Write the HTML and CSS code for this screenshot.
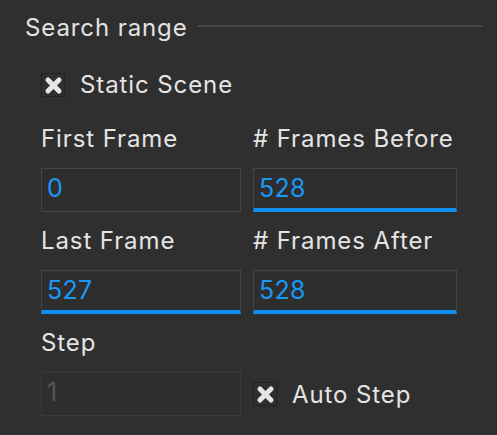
FILE: index.html
```html
<!DOCTYPE html>
<html>
<head>
<meta charset="utf-8">
<link rel="stylesheet" href="styles.css">
</head>
<body>
<div class="panel">
  <div class="group-header">
    <span class="group-title">Search range</span>
    <span class="group-rule"></span>
  </div>
  <label class="check-row static-row">
    <span class="checkbox"><svg viewBox="0 0 24 24" width="24" height="24"><path d="M7 7 L18 18 M18 7 L7 18" /></svg></span>
    <span class="check-label">Static Scene</span>
  </label>
  <div class="fields">
    <div class="field">
      <div class="field-label">First Frame</div>
      <div class="input">0</div>
    </div>
    <div class="field">
      <div class="field-label"># Frames Before</div>
      <div class="input focused">528</div>
    </div>
    <div class="field">
      <div class="field-label">Last Frame</div>
      <div class="input focused">527</div>
    </div>
    <div class="field">
      <div class="field-label"># Frames After</div>
      <div class="input focused">528</div>
    </div>
    <div class="field">
      <div class="field-label">Step</div>
      <div class="input disabled">1</div>
    </div>
    <div class="field field-bottom">
      <label class="check-row">
        <span class="checkbox"><svg viewBox="0 0 24 24" width="24" height="24"><path d="M7 7 L18 18 M18 7 L7 18" /></svg></span>
        <span class="check-label">Auto Step</span>
      </label>
    </div>
  </div>
</div>
</body>
</html>
```
FILE: styles.css
```css
html, body {
  margin: 0;
  padding: 0;
  background: #2f2f2f;
}
body {
  font-family: Inter, "Noto Sans", sans-serif;
  color: #e4e4e4;
  width: 497px;
  height: 435px;
  overflow: hidden;
}
.panel {
  padding: 13px 14px 0 41px;
}
.group-header {
  display: flex;
  align-items: center;
  margin-left: -16px;
  height: 29px;
}
.group-title {
  font-size: 24px;
  line-height: 29px;
  letter-spacing: 0.9px;
  color: #e2e2e2;
}
.group-rule {
  flex: 1;
  height: 2px;
  background: #464646;
  margin-left: 10px;
  margin-top: -3px;
}
.check-row {
  display: flex;
  align-items: center;
  height: 29px;
}
.static-row {
  margin-top: 28px;
}
.checkbox {
  width: 24px;
  height: 24px;
  box-sizing: border-box;
  border: 1px solid #222;
  display: flex;
  align-items: center;
  justify-content: center;
}
.checkbox svg {
  display: block;
  stroke: #e6e6e6;
  stroke-width: 5;
  stroke-linecap: round;
  fill: none;
  margin: -1px;
}
.check-label {
  font-size: 24px;
  line-height: 29px;
  letter-spacing: 0.9px;
  margin-left: 15px;
}
.fields {
  display: grid;
  grid-template-columns: 200px 204px;
  column-gap: 12px;
  row-gap: 14px;
  margin-top: 25px;
}
.field-label {
  font-size: 24px;
  line-height: 29px;
  letter-spacing: 0.9px;
  height: 29px;
  margin-bottom: 15px;
  white-space: nowrap;
}
.input {
  height: 44px;
  box-sizing: border-box;
  border: 1px solid #454545;
  padding: 4px 5px 0;
  font-size: 25px;
  line-height: 30px;
  letter-spacing: 0.3px;
  color: #1899f5;
  background: #2e2e2e;
}
.input.focused {
  border-bottom: 4px solid #0f8ff0;
}
.input.disabled {
  border-color: #3a3a3a;
  color: #555;
}
.field-bottom {
  display: flex;
  align-items: flex-end;
}
.field-bottom .check-row {
  height: 44px;
}
```
